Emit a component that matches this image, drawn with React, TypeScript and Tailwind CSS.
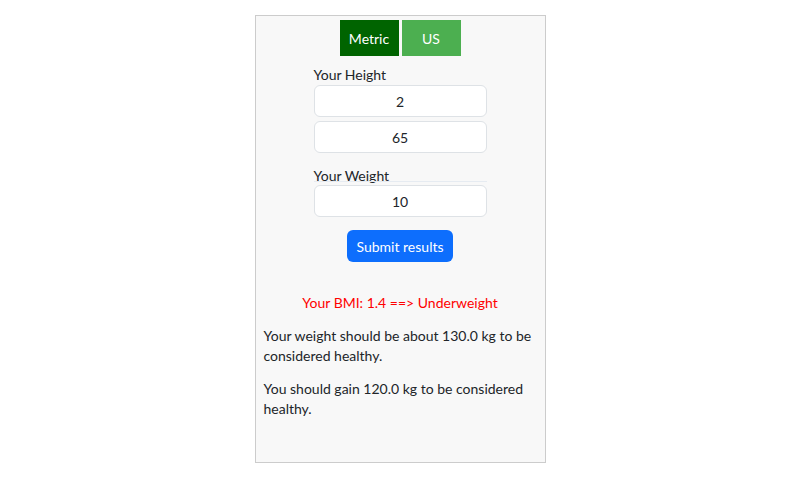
import { useState } from 'react';

export default function App() {
    const [unit, setUnit] = useState<'metric' | 'us'>('metric');
    const [height1, setHeight1] = useState('2');
    const [height2, setHeight2] = useState('65');
    const [weight, setWeight] = useState('10');

    const inputCls =
        'w-[173px] h-[32px] rounded-[6px] border border-[#dee2e6] bg-white text-center text-[14px] text-[#212529] outline-none';

    return (
        <div className="min-h-[483px] bg-white pt-[15px] pl-[10px] font-['Lato',sans-serif] text-[#212529]">
            <div className="mx-auto flex h-[448px] w-[291px] flex-col border border-[#cccccc] bg-[#f8f8f8] px-[8px] pt-[4px]">
                <div className="flex justify-center gap-[3px]">
                    <button
                        onClick={() => setUnit('metric')}
                        className="h-[36px] w-[59px] bg-[#006400] text-[14px] text-white">
                        Metric
                    </button>
                    <button
                        onClick={() => setUnit('us')}
                        className="h-[36px] w-[59px] bg-[#4caf50] text-[14px] text-white">
                        US
                    </button>
                </div>

                <div className="mx-auto mt-[8px] flex w-[173px] flex-col">
                    <label className="text-[14px] leading-[21px]">Your Height</label>
                    <input
                        className={inputCls}
                        value={height1}
                        onChange={(e) => setHeight1(e.target.value)}
                    />
                    <input
                        className={inputCls + ' mt-[4px]'}
                        value={height2}
                        onChange={(e) => setHeight2(e.target.value)}
                    />

                    <label className="mt-[12px] text-[14px] leading-[21px]">Your Weight</label>
                    <div className="-mt-[5px] mb-[3px] h-px bg-[#e6ebf1]" />
                    <input
                        className={inputCls}
                        value={weight}
                        onChange={(e) => setWeight(e.target.value)}
                    />
                </div>

                <button className="mx-auto mt-[13px] h-[32px] w-[106px] rounded-[6px] bg-[#0d6efd] text-[14px] text-white">
                    Submit results
                </button>

                <p className="mt-[31px] text-center text-[14px] leading-[20px] text-[#ff0000]">
                    Your BMI: 1.4 ==&gt; Underweight
                </p>
                <p className="mt-[13px] text-[14px] leading-[20px]">
                    Your weight should be about 130.0 kg to be considered healthy.
                </p>
                <p className="mt-[13px] text-[14px] leading-[20px]">
                    You should gain 120.0 kg to be considered healthy.
                </p>
                {unit === 'us' && <span className="hidden">us</span>}
            </div>
        </div>
    );
}
